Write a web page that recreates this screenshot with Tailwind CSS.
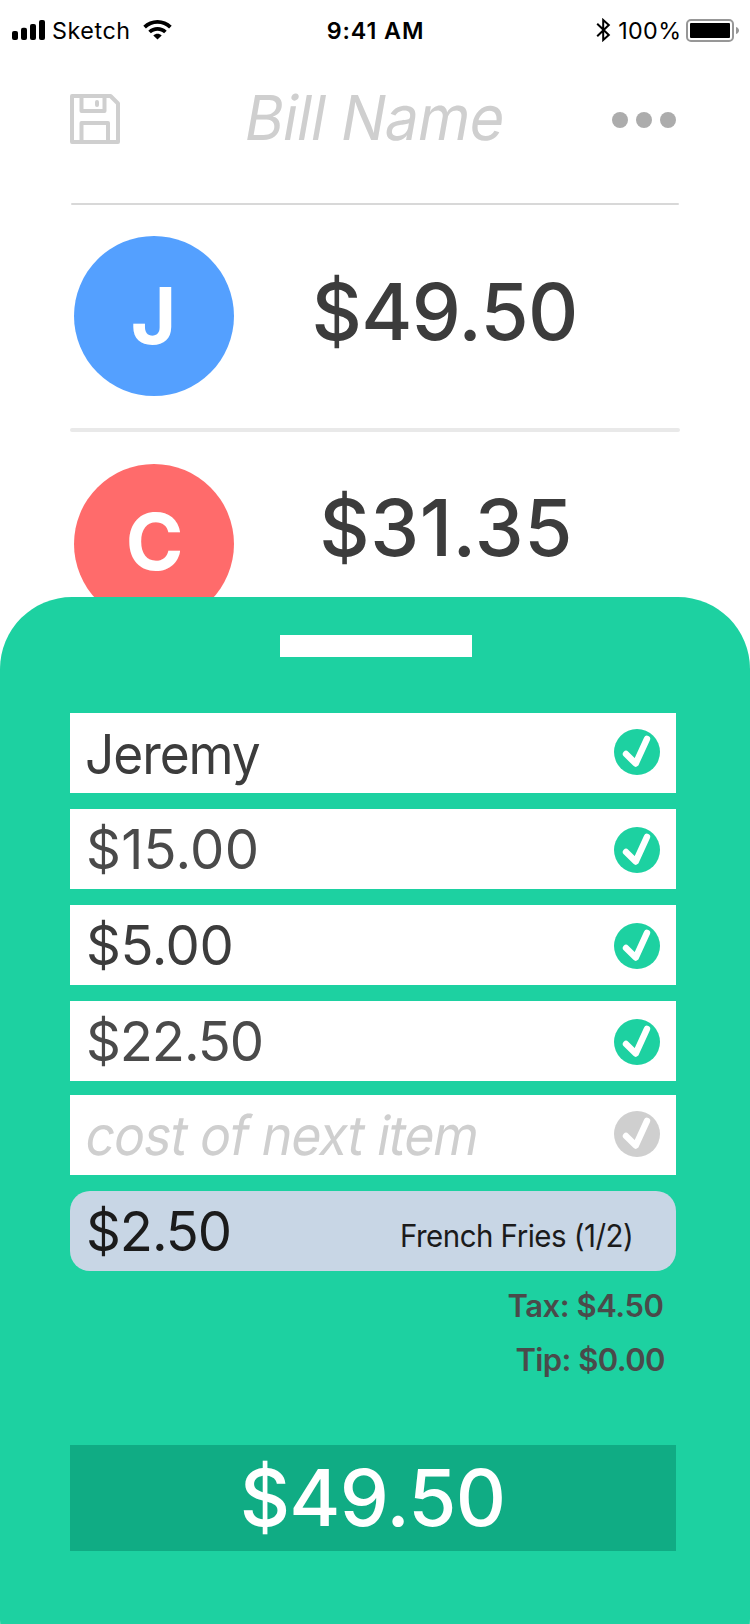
<!DOCTYPE html>
<html lang="en">
<head>
<meta charset="utf-8">
<title>Bill Split</title>
<script src="https://cdn.jsdelivr.net/npm/@tailwindcss/browser@4"></script>
</head>
<body class="bg-white">
<svg class="hidden">
  <symbol id="check" viewBox="0 0 46 46">
    <circle cx="23" cy="23" r="23" fill="currentColor"/>
    <path d="M12 25L21.7 34.6L33 9.8" fill="none" stroke="#fff" stroke-width="6.4" stroke-linecap="round" stroke-linejoin="round"/>
  </symbol>
</svg>
<div class="w-[750px] h-[1624px] overflow-hidden bg-white font-['Inter','Liberation_Sans',sans-serif] whitespace-nowrap">

  <!-- Status bar -->
  <div class="grid grid-cols-3 h-[61px] pl-3 pr-[11px] text-[23.3px] leading-[61px] text-black">
    <div class="flex items-center">
      <svg class="w-[33px] h-5 -mt-px" viewBox="0 0 33 20"><rect y="11" width="6" height="9" rx="2"/><rect x="9" y="7.7" width="6" height="12.3" rx="2"/><rect x="18" y="4" width="6" height="16" rx="2"/><rect x="27" width="6" height="20" rx="2"/></svg>
      <span class="ml-[7px] tracking-[0.55px]">Sketch</span>
      <svg class="ml-[12px] w-[29px] h-5 -mt-px" viewBox="0 0 29 20">
        <path d="M14.5 0C19.9 0 25 2.1 28.7 5.8L26.1 8.5C23 5.5 18.9 3.8 14.5 3.8S6 5.5 2.9 8.5L.3 5.8C4 2.1 9.1 0 14.5 0Z"/>
        <path d="M14.5 7C17.9 7 21.2 8.3 23.7 10.7L21.1 13.3C19.3 11.6 17 10.7 14.5 10.7S9.7 11.6 7.9 13.3L5.3 10.7C7.8 8.3 11.1 7 14.5 7Z"/>
        <path d="M14.5 13.8C16 13.8 17.5 14.4 18.7 15.4L14.5 19.6L10.3 15.4C11.5 14.4 13 13.8 14.5 13.8Z"/>
      </svg>
    </div>
    <div class="text-center font-semibold tracking-[0.9px]">9:41 AM</div>
    <div class="flex items-center justify-end">
      <svg class="w-[15px] h-6 -mt-px" viewBox="0 0 15 24" fill="none" stroke="#000" stroke-width="2"><path d="M1.2 5.8L12.8 17L7.2 22V2L12.8 7L1.2 18.2"/></svg>
      <span class="ml-[7px] tracking-[0.4px]">100%</span>
      <svg class="ml-[4.5px] w-[53px] h-[23px]" viewBox="0 0 53 23"><rect x="1" y="1" width="46" height="21" rx="4" fill="none" stroke="#979797" stroke-width="2"/><rect x="4" y="4" width="40" height="15" rx="1"/><path d="M50 8C52 8.6 53 10 53 11.5S52 14.4 50 15Z" fill="#979797"/></svg>
    </div>
  </div>

  <!-- Bill header -->
  <header class="flex items-start h-[142px] pl-[70px] pr-[74px]">
    <svg class="mt-[33px] w-[50px] h-[50px]" viewBox="0 0 50 50" fill="none" stroke="#cfcfcf" stroke-width="4" stroke-linejoin="round">
      <path d="M2 2H40.5L48 9.5V48H2Z"/><path d="M11.5 2V17H34.5V2"/><path d="M11.5 48V29H38V48"/><path d="M27 8V11" stroke-linecap="round"/>
    </svg>
    <h1 class="mt-[24px] ml-[121px] w-[270px] origin-[0_61px] [transform:skewX(-10deg)_scaleX(0.958)] text-[61.9px] leading-[66px] tracking-[-0.5px] text-[#cfcfcf]">Bill Name</h1>
    <div class="flex gap-2 mt-[51px] ml-auto">
      <i class="size-4 rounded-full bg-[#acacac]"></i><i class="size-4 rounded-full bg-[#acacac]"></i><i class="size-4 rounded-full bg-[#acacac]"></i>
    </div>
  </header>

  <!-- People -->
  <main class="text-[78px] font-medium text-[#3c3c3c]">
    <div class="ml-[71px] w-[608px] h-[2px] rounded-full bg-[#d8d8d8]"></div>
    <div class="flex items-start h-[223px] pt-[31px] pl-[74px]">
      <div class="size-40 rounded-full bg-[#54a0ff] text-white text-center pr-px leading-[160px] font-[650]">J</div>
      <div class="ml-[77.5px] leading-[151px] tracking-[-0.61px]">$49.50</div>
    </div>
    <div class="ml-[70px] w-[610px] h-1 rounded-full bg-[#e9e9e9]"></div>
    <div class="flex items-start h-[192px] pt-8 pl-[74px]">
      <div class="size-40 rounded-full bg-[#ff6b6b] text-white text-center pl-px leading-[156px] font-[650]">C</div>
      <div class="ml-[85.3px] leading-[127px] tracking-[0.55px]">$31.35</div>
    </div>
  </main>

  <!-- Item sheet, lying over the people list -->
  <section class="relative -mt-[27px] h-[1093px] rounded-[72px] bg-[#1dd1a1] pt-[38px] pl-[70px] pr-[74px] text-[54.4px] leading-[80px] text-[#3c3c3c]">
    <div class="ml-[210px] w-48 h-[22px] bg-white"></div>
    <div class="mt-14 flex flex-col gap-4">
      <div class="flex items-start justify-between h-20 bg-white pl-[15px] pr-4">
        <span class="origin-left [transform:scaleX(0.945)] leading-[82px] tracking-[-1.12px]">Jeremy</span>
        <svg class="mt-4 size-[46px] text-[#1dd1a1]"><use href="#check"/></svg>
      </div>
      <div class="flex items-start justify-between h-20 bg-white pl-4 pr-4">
        <span class="tracking-[0.3px] text-[#4a4a4a]">$15.00</span>
        <svg class="mt-[18px] size-[46px] text-[#1dd1a1]"><use href="#check"/></svg>
      </div>
      <div class="flex items-start justify-between h-20 bg-white pl-4 pr-4">
        <span class="tracking-[-0.43px]">$5.00</span>
        <svg class="mt-[18px] size-[46px] text-[#1dd1a1]"><use href="#check"/></svg>
      </div>
      <div class="flex items-start justify-between h-20 bg-white pl-4 pr-4">
        <span class="tracking-[-1.1px] text-[#4a4a4a]">$22.50</span>
        <svg class="mt-[18px] size-[46px] text-[#1dd1a1]"><use href="#check"/></svg>
      </div>
      <div class="-mt-0.5 flex items-start justify-between h-20 bg-white pl-[13px] pr-4 text-[#cfcfcf]">
        <span class="origin-[0_60px] [transform:skewX(-10deg)_scaleX(0.95)] tracking-[-1px]">cost of next item</span>
        <svg class="mt-4 size-[46px]"><use href="#check"/></svg>
      </div>
      <div class="flex items-start justify-between h-20 rounded-[20px] bg-[#c8d6e5] pl-4 text-[#1b1b1b]">
        <span class="tracking-[-1.08px]">$2.50</span>
        <span class="w-[276px] origin-left [transform:scaleX(0.95)] text-[31px] leading-[89.4px] tracking-[-0.54px]">French Fries (1/2)</span>
      </div>
    </div>
    <div class="mt-2 text-right text-[31px] leading-[54px] font-semibold text-[#4a4a4a]">
      <p class="pr-[12.5px] tracking-[-0.46px]">Tax: $4.50</p>
      <p class="pr-[11px] tracking-[-0.57px]">Tip: $0.00</p>
    </div>
    <div class="mt-[58px] h-[106px] bg-[#10ac84] pr-px text-center text-[78px] leading-[105px] font-medium tracking-[-0.71px] text-white">$49.50</div>
  </section>
</div>
</body>
</html>
